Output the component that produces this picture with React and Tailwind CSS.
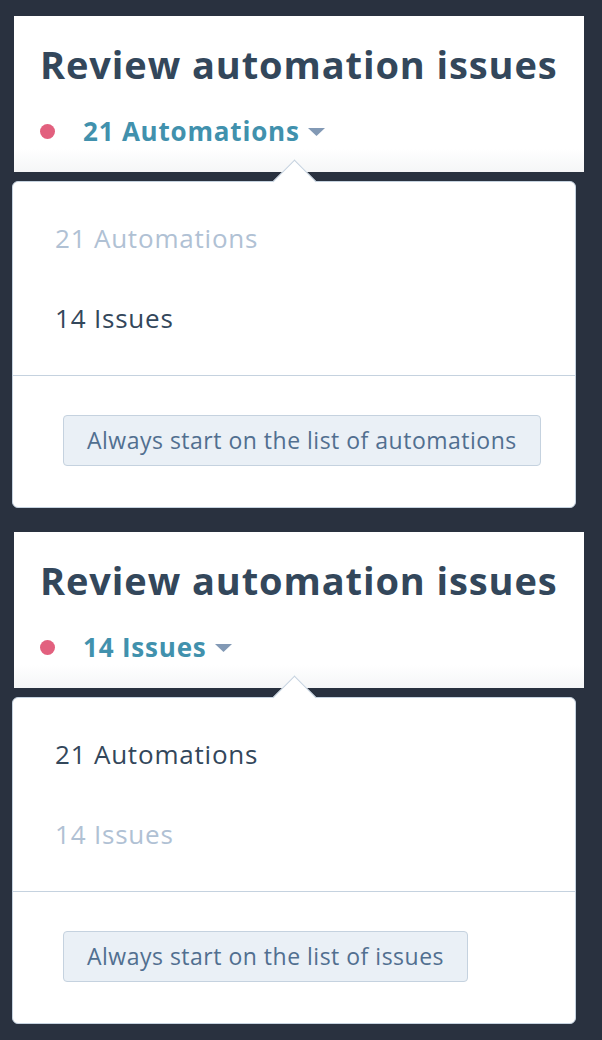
import React from 'react';

const font = { fontFamily: '"Open Sans", "Noto Sans", sans-serif' };

const Caret = () => (
  <svg width="17" height="8" viewBox="0 0 17 8" className="ml-[8px] mt-[2px]">
    <path d="M0 0 H17 L8.5 8 Z" fill="#8299b5" />
  </svg>
);

const Header = ({ label }) => (
  <div className="ml-[14px] w-[570px] h-[156px] bg-linear-to-b from-white from-85% to-[#f5f6f7] pl-[26px]">
    <h1 className="pt-[25px] text-[38px] leading-[46px] font-bold text-[#33475b] tracking-[0.9px]">
      Review automation issues
    </h1>
    <div className="mt-[28px] flex items-center h-[32px]">
      <span className="w-[15px] h-[15px] rounded-full bg-[#e2607e]" />
      <span className="ml-[28px] text-[26px] leading-[32px] font-bold text-[#4191ad] tracking-[0.8px]">{label}</span>
      <Caret />
    </div>
  </div>
);

const Popover = ({ active, button }) => (
  <div className="relative ml-[12px] mt-[9px] w-[564px] bg-white border border-[#c5d2df] rounded-[6px]">
    <div className="absolute left-[266px] top-[-16px] w-[31px] h-[31px] rotate-45 bg-white border-l border-t border-[#c5d2df]" />
    <div className="relative pt-[16px] pb-[17px]">
      {['21 Automations', '14 Issues'].map((item) => (
        <div
          key={item}
          className={`h-[80px] flex items-center pl-[42px] text-[26px] tracking-[0.8px] ${item === active ? 'text-[#b0c1d4]' : 'text-[#33475b]'}`}
        >
          {item}
        </div>
      ))}
    </div>
    <div className="border-t border-[#c5d2df]" />
    <div className="pt-[39px] pb-[41px] pl-[50px]">
      <button className="h-[51px] px-[23px] bg-[#eaf0f6] border border-[#c5d2df] rounded-[4px] text-[23px] tracking-[0.5px] text-[#516f90]">
        {button}
      </button>
    </div>
  </div>
);

export default function App() {
  return (
    <div className="min-h-screen w-[602px] bg-[#29313f] pt-[16px]" style={font}>
      <Header label="21 Automations" />
      <Popover active="21 Automations" button="Always start on the list of automations" />
      <div className="h-[24px]" />
      <Header label="14 Issues" />
      <Popover active="14 Issues" button="Always start on the list of issues" />
    </div>
  );
}
